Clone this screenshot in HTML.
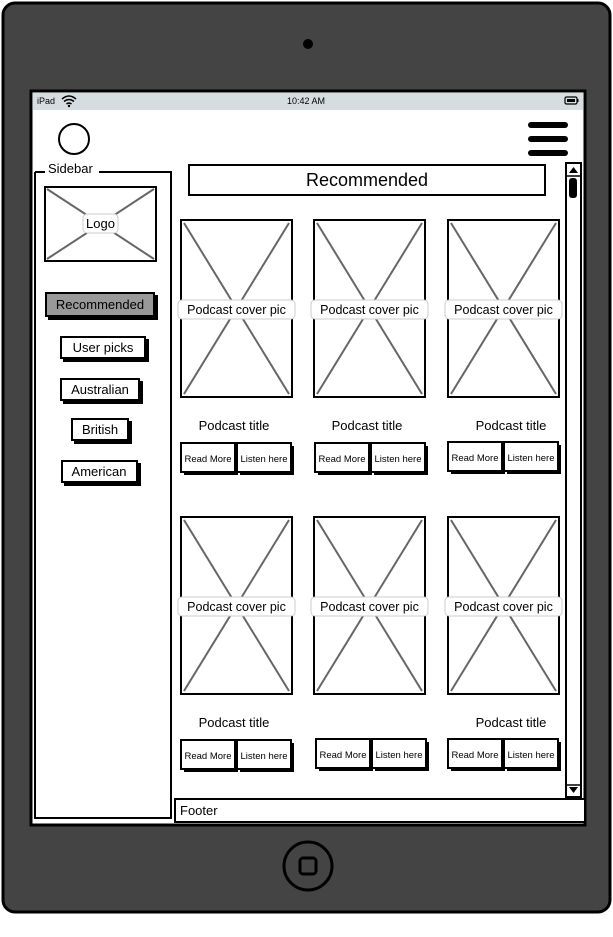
<!DOCTYPE html>
<html><head><style>
html,body{margin:0;padding:0;background:#fff;}
svg{display:block}
text{font-family:"Liberation Sans",sans-serif;fill:#000}
</style></head><body>
<svg width="613" height="937" viewBox="0 0 613 937" xmlns="http://www.w3.org/2000/svg">
<rect x="3" y="3" width="607" height="909" rx="12" fill="#444" stroke="#000" stroke-width="3"/>
<circle cx="308" cy="44" r="5" fill="#000"/>
<circle cx="308" cy="866" r="24" fill="none" stroke="#000" stroke-width="3"/>
<rect x="300" y="858" width="16" height="16" rx="3" fill="none" stroke="#000" stroke-width="3"/>
<rect x="31" y="91" width="554" height="734" fill="#fff" stroke="#000" stroke-width="3"/>
<rect x="33" y="93" width="550" height="17" fill="#d6dde0"/>
<text x="37" y="104" font-size="9">iPad</text>
<path d="M62 99 q7-6 14 0 M64 101.5 q5-4 10 0 M66.5 104 q2.5-2 5 0" stroke="#000" stroke-width="1.5" fill="none"/>
<circle cx="69" cy="106" r="1.2"/>
<text x="287" y="104" font-size="9">10:42 AM</text>
<rect x="565" y="97" width="12" height="7" rx="1.5" fill="none" stroke="#000" stroke-width="1.2"/>
<rect x="567" y="99" width="8" height="3" fill="#000"/><rect x="577" y="99" width="1.5" height="3"/>
<circle cx="74" cy="139" r="15" fill="none" stroke="#000" stroke-width="2"/>
<rect x="528" y="122" width="40" height="6" rx="3"/><rect x="528" y="136" width="40" height="6" rx="3"/><rect x="528" y="150" width="40" height="6" rx="3"/>
<!-- sidebar -->
<path d="M35 172 V818 H171 V172 H99 M35 172 H45" stroke="#000" stroke-width="2" fill="none"/>
<text x="48" y="173" font-size="13">Sidebar</text>
<rect x="45" y="187" width="111" height="74" fill="#fff" stroke="#000" stroke-width="2"/>
<path d="M47 189 L154 259 M154 189 L47 259" stroke="#666" stroke-width="2"/>
<rect x="83" y="214" width="35" height="19" rx="4" fill="#fff" stroke="#ccc"/>
<text x="100.5" y="228" font-size="13" text-anchor="middle">Logo</text>
<g stroke="#000" stroke-width="2">
<rect x="49" y="296" width="108" height="23" fill="#000"/><rect x="46" y="293" width="108" height="23" fill="#999"/>
<rect x="64" y="340" width="84" height="21" fill="#000"/><rect x="61" y="337" width="84" height="21" fill="#fff"/>
<rect x="64" y="382" width="78" height="21" fill="#000"/><rect x="61" y="379" width="78" height="21" fill="#fff"/>
<rect x="75" y="422" width="56" height="21" fill="#000"/><rect x="72" y="419" width="56" height="21" fill="#fff"/>
<rect x="65" y="464" width="75" height="21" fill="#000"/><rect x="62" y="461" width="75" height="21" fill="#fff"/>
</g>
<g font-size="13" text-anchor="middle">
<text x="100" y="309">Recommended</text><text x="103" y="352">User picks</text>
<text x="100" y="394">Australian</text><text x="100" y="434">British</text><text x="99" y="476">American</text>
</g>
<!-- header -->
<rect x="189" y="165" width="356" height="30" fill="#fff" stroke="#000" stroke-width="2"/>
<text x="367" y="186" font-size="18" text-anchor="middle">Recommended</text>
<!-- scrollbar -->
<rect x="566" y="163" width="15" height="634" fill="#fff" stroke="#000" stroke-width="2"/>
<path d="M569 173 h9 l-4.5 -6z M569 787 h9 l-4.5 6z" fill="#000"/>
<line x1="566" y1="176" x2="581" y2="176" stroke="#000" stroke-width="1.5"/>
<line x1="566" y1="785" x2="581" y2="785" stroke="#000" stroke-width="1.5"/>
<rect x="569" y="178" width="8" height="20" rx="3"/>
<!-- footer -->
<rect x="175" y="799" width="410" height="23" fill="#fff" stroke="#000" stroke-width="2"/>
<text x="180" y="815" font-size="13">Footer</text>
<defs>
<g id="card">
<rect x="0" y="0" width="111" height="177" fill="#fff" stroke="#000" stroke-width="2"/>
<path d="M3 3 L108 174 M108 3 L3 174" stroke="#666" stroke-width="2"/>
<rect x="-3" y="80" width="117" height="19" rx="4" fill="#fff" stroke="#ccc"/>
<text x="55.5" y="94" font-size="12.5" text-anchor="middle">Podcast cover pic</text>
</g>
<g id="btns">
<rect x="3" y="3" width="54" height="29" fill="#000"/><rect x="0" y="0" width="54" height="29" fill="#fff" stroke="#000" stroke-width="2"/>
<rect x="59" y="3" width="54" height="29" fill="#000"/><rect x="56" y="0" width="54" height="29" fill="#fff" stroke="#000" stroke-width="2"/>
<text x="27" y="19" font-size="9.5" text-anchor="middle">Read More</text>
<text x="83" y="19" font-size="9.5" text-anchor="middle">Listen here</text>
</g>
</defs>
<use href="#card" x="181" y="220"/><use href="#card" x="314" y="220"/><use href="#card" x="448" y="220"/>
<use href="#card" x="181" y="517"/><use href="#card" x="314" y="517"/><use href="#card" x="448" y="517"/>
<g font-size="13" text-anchor="middle">
<text x="234" y="430">Podcast title</text><text x="367" y="430">Podcast title</text><text x="511" y="430">Podcast title</text>
<text x="234" y="727">Podcast title</text><text x="511" y="727">Podcast title</text>
</g>
<use href="#btns" x="181" y="443"/><use href="#btns" x="315" y="443"/><use href="#btns" x="448" y="442"/>
<use href="#btns" x="181" y="740"/><use href="#btns" x="316" y="739"/><use href="#btns" x="448" y="739"/>
</svg>
</body></html>
